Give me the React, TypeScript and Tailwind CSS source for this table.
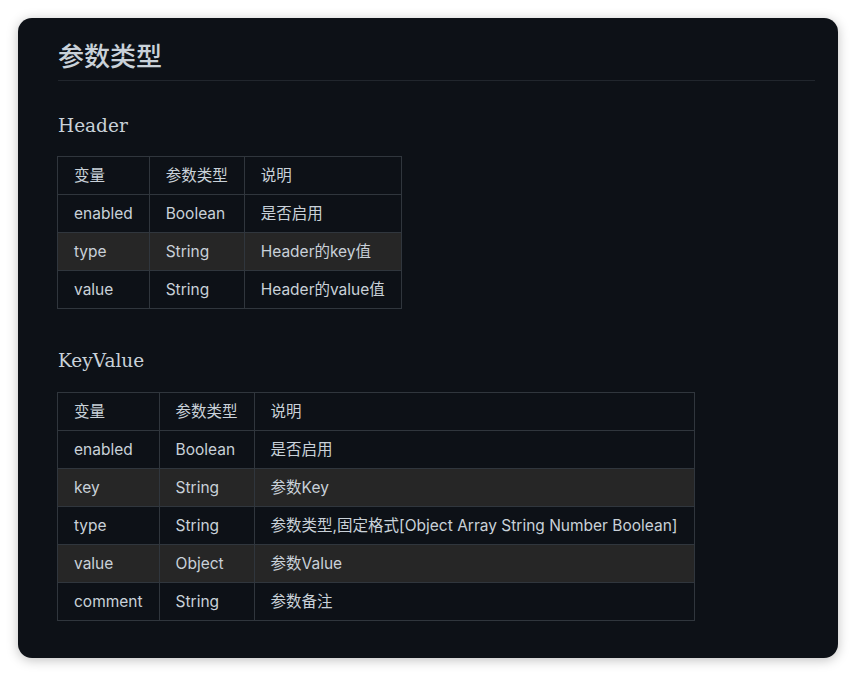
const headerRows = [
  ['enabled', 'Boolean', '是否启用'],
  ['type', 'String', 'Header的key值'],
  ['value', 'String', 'Header的value值'],
];

const keyValueRows = [
  ['enabled', 'Boolean', '是否启用'],
  ['key', 'String', '参数Key'],
  ['type', 'String', '参数类型,固定格式[Object Array String Number Boolean]'],
  ['value', 'Object', '参数Value'],
  ['comment', 'String', '参数备注'],
];

function ParamTable({ rows }: { rows: string[][] }) {
  return (
    <table className="-ml-px border-collapse text-[15.5px] leading-[25px] text-[#c9d1d9]">
      <thead>
        <tr>
          {['变量', '参数类型', '说明'].map((h) => (
            <th key={h} className="border border-[#30363d] px-4 py-1.5 text-left font-normal">
              {h}
            </th>
          ))}
        </tr>
      </thead>
      <tbody>
        {rows.map((row, i) => (
          <tr key={i} className={i % 2 === 1 ? 'bg-[#262626]' : ''}>
            {row.map((cell, j) => (
              <td key={j} className="border border-[#30363d] px-4 py-1.5 whitespace-nowrap">
                {cell}
              </td>
            ))}
          </tr>
        ))}
      </tbody>
    </table>
  );
}

export default function App() {
  return (
    <div className="h-screen w-full bg-white p-[18px] font-['Inter','Noto_Sans_CJK_SC',sans-serif]">
      <div className="h-full rounded-[14px] bg-[#0d1117] pl-10 pr-[23px] pt-[22px] shadow-[0_2px_12px_rgba(0,0,0,0.25)]">
        <h2 className="border-b border-[#21262d] pb-[7px] text-[26px] font-medium leading-[33px] text-[#c9d1d9]">
          参数类型
        </h2>

        <h3 className="mt-[30px] mb-[15px] font-['DejaVu_Serif',serif] text-[18.5px] leading-[30px] text-[#c9d1d9]">
          Header
        </h3>
        <ParamTable rows={headerRows} />

        <h3 className="mt-[37px] mb-4 font-['DejaVu_Serif',serif] text-[18.5px] leading-[30px] text-[#c9d1d9]">
          KeyValue
        </h3>
        <ParamTable rows={keyValueRows} />
      </div>
    </div>
  );
}
